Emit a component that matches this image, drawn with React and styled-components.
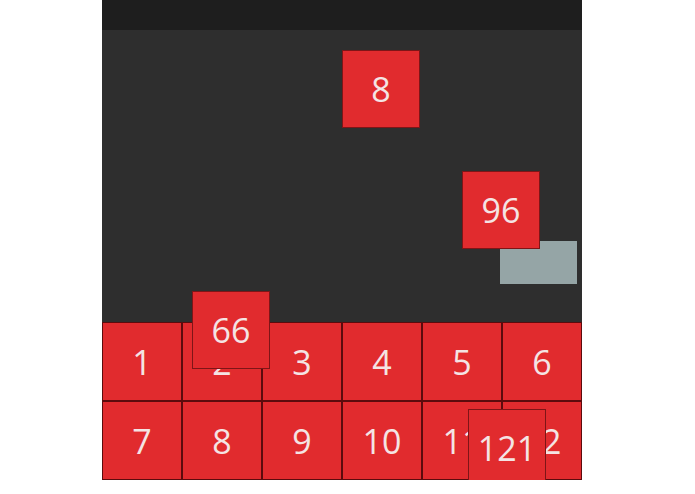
import React from 'react'
import styled, { createGlobalStyle } from 'styled-components'

const GlobalStyle = createGlobalStyle`
  html, body {
    margin: 0;
    padding: 0;
    background: #ffffff;
  }
  body {
    font-family: 'Open Sans', 'Noto Sans', sans-serif;
  }
`

const Board = styled.div`
  position: relative;
  width: 480px;
  height: 480px;
  margin-left: 102px;
  display: flex;
  flex-direction: column;
  background: #2e2e2e;
  overflow: hidden;
`

const TopBar = styled.div`
  height: 30px;
  flex: none;
  background: #1e1e1e;
`

const Field = styled.div`
  flex: 1;
  display: flex;
  flex-direction: column;
  justify-content: flex-end;
`

const Grid = styled.div`
  display: grid;
  grid-template-columns: repeat(6, 80px);
  grid-auto-rows: 79px;
`

const Tile = styled.div`
  box-sizing: border-box;
  display: flex;
  align-items: center;
  justify-content: center;
  background: #e12b2e;
  border: 1px solid #5c0b0d;
  color: #f4e4e4;
  font-size: 34px;
  line-height: 1;
`

const FloatTile = styled(Tile)`
  position: absolute;
  width: 78px;
  height: 78px;
  border-color: #7e1517;
`

const Paddle = styled.div`
  position: absolute;
  left: 398px;
  top: 241px;
  width: 77px;
  height: 43px;
  background: #95a5a6;
`

const gridNumbers = [1, 2, 3, 4, 5, 6, 7, 8, 9, 10, 11, 12]

const floating = [
  { n: 8, x: 240, y: 50 },
  { n: 96, x: 360, y: 171 },
  { n: 66, x: 90, y: 291 },
  { n: 121, x: 366, y: 409 },
]

export default function App() {
  return (
    <>
      <GlobalStyle />
      <Board>
        <TopBar />
        <Field>
          <Grid>
            {gridNumbers.map(n => (
              <Tile key={n}>{n}</Tile>
            ))}
          </Grid>
        </Field>
        <Paddle />
        {floating.map(t => (
          <FloatTile key={t.n} style={{ left: t.x, top: t.y }}>
            {t.n}
          </FloatTile>
        ))}
      </Board>
    </>
  )
}
